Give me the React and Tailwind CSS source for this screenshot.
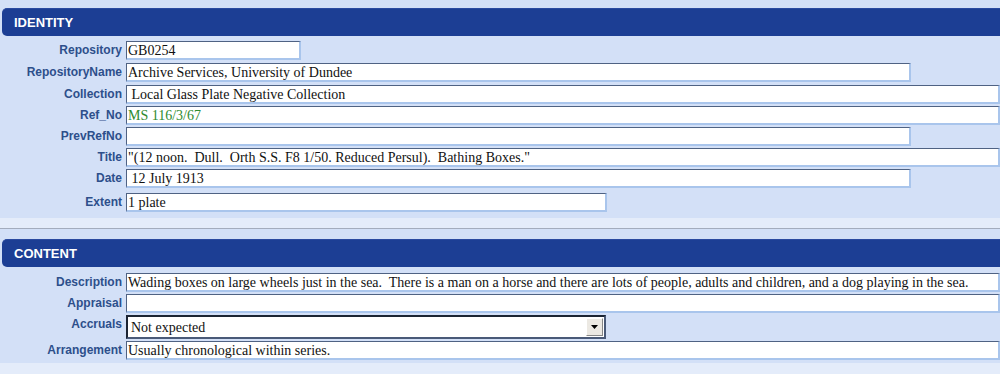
import React from "react";

const labelCls =
  "w-[126px] shrink-0 pr-[4px] text-right font-bold text-[12px] leading-[19px] text-[#2d4f8b] [font-family:'Liberation_Sans',Arial,sans-serif]";
const inputBase =
  "h-[19px] bg-white border-t border-l border-t-[#4f6283] border-l-[#4f6283] border-b-2 border-r-2 border-b-[#a9c5ec] border-r-[#a9c5ec] pl-[1px] text-[14px] leading-[17px] whitespace-pre overflow-hidden [font-family:'Liberation_Serif','Times_New_Roman',serif]";

function Row({ label, value, width, mb = "mb-[2px]", green }) {
  return (
    <div className={`flex items-start ${mb}`}>
      <div className={labelCls}>{label}</div>
      <div className={`${inputBase} ${width} ${green ? "text-[#2e8b2e]" : "text-[#111]"}`}>{value}</div>
    </div>
  );
}

function Header({ title }) {
  return (
    <div className="ml-[2px] h-[28px] rounded-l-[5px] bg-[#1c3e94] border-t border-[#2a4aa0] pl-[12px] flex items-center">
      <span className="text-white font-bold text-[13px] [font-family:'Liberation_Sans',Arial,sans-serif]">{title}</span>
    </div>
  );
}

export default function App() {
  return (
    <div className="w-[1000px] h-[374px] overflow-hidden bg-[#e4ecfa]">
      <div className="bg-[#d3e0f7] pt-[8px] h-[218px]">
        <Header title="IDENTITY" />
        <div className="mt-[5px]">
          <Row label="Repository" value="GB0254" width="w-[175px]" mb="mb-[3px]" />
          <Row label="RepositoryName" value="Archive Services, University of Dundee" width="w-[785px]" mb="mb-[3px]" />
          <Row label="Collection" value=" Local Glass Plate Negative Collection" width="flex-1" />
          <Row label="Ref_No" value="MS 116/3/67" width="flex-1" green />
          <Row label="PrevRefNo" value="" width="w-[785px]" />
          <Row label="Title" value={'"(12 noon.  Dull.  Orth S.S. F8 1/50. Reduced Persul).  Bathing Boxes."'} width="flex-1" />
          <Row label="Date" value=" 12 July 1913" width="w-[785px]" mb="mb-[5px]" />
          <Row label="Extent" value="1 plate" width="w-[481px]" mb="mb-0" />
        </div>
      </div>
      <div className="h-[10px]" />
      <div className="border-t border-[#a3acbd] bg-[#d3e0f7] pt-[10px] h-[135px]">
        <Header title="CONTENT" />
        <div className="mt-[6px]">
          <Row
            label="Description"
            value="Wading boxes on large wheels just in the sea.  There is a man on a horse and there are lots of people, adults and children, and a dog playing in the sea."
            width="flex-1"
          />
          <Row label="Appraisal" value="" width="flex-1" mb="mb-[2px]" />
          <div className="flex items-start mb-[2px]">
            <div className={labelCls}>Accruals</div>
            <div className="w-[480px] h-[24px] bg-white border-2 border-[#1b2433] border-r-[#4a5a78] border-b-[#4a5a78] flex items-center">
              <span className="flex-1 pl-[3px] text-[14px] text-[#111] [font-family:'Liberation_Serif','Times_New_Roman',serif]">Not expected</span>
              <div className="w-[17px] h-[18px] mr-[1px] bg-[#ece9e3] border border-t-white border-l-white border-b-[#888] border-r-[#888] flex items-center justify-center">
                <svg width="7" height="4" viewBox="0 0 7 4"><path d="M0 0h7L3.5 4z" fill="#000" /></svg>
              </div>
            </div>
          </div>
          <Row label="Arrangement" value="Usually chronological within series." width="flex-1" mb="mb-0" />
        </div>
      </div>
    </div>
  );
}
